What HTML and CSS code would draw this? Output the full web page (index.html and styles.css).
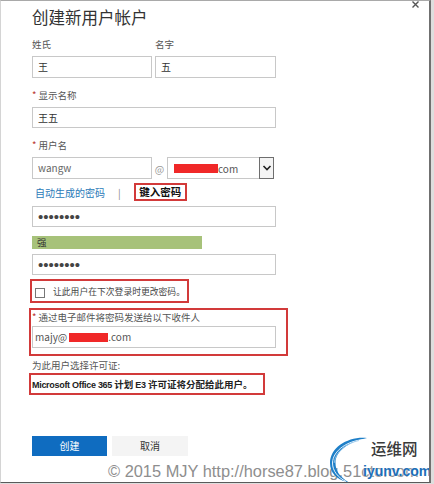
FILE: index.html
```html
<!DOCTYPE html>
<html>
    <head lang="zh">
        <meta charset="UTF-8">
        <title>创建新用户帐户</title>
        <link rel="stylesheet" href="styles.css">
    </head>
    <body>
        <div class="frame">
            <span class="close">
                <svg width="7" height="7" viewBox="0 0 7 7"><path d="M0.5 0.5L6.5 6.5M6.5 0.5L0.5 6.5" stroke="#555" stroke-width="1.4"/></svg>
            </span>
            <div class="form">
                <h1 class="title">创建新用户帐户</h1>
                <div class="names">
                    <div class="col first">
                        <div class="label">姓氏</div>
                        <div class="input">王</div>
                    </div>
                    <div class="col second">
                        <div class="label">名字</div>
                        <div class="input">五</div>
                    </div>
                </div>
                <div class="label gap10"><span class="star">*</span>显示名称</div>
                <div class="input thin mt6">王五</div>
                <div class="label gap10"><span class="star">*</span>用户名</div>
                <div class="user-row">
                    <div class="input nomt user">wangw</div>
                    <span class="at">@</span>
                    <div class="select">
                        <div class="sel-text"><span class="mask"></span>com</div>
                        <div class="sel-arrow">
                            <svg width="10" height="8" viewBox="0 0 10 8"><path d="M1.5 2L5 5.5L8.5 2" fill="none" stroke="#222" stroke-width="1.6"/></svg>
                        </div>
                    </div>
                </div>
                <div class="links">
                    <a class="auto">自动生成的密码</a>
                    <span class="sep">|</span>
                    <span class="typed">键入密码</span>
                </div>
                <div class="input thin pwd mt5">••••••••</div>
                <div class="strength">强</div>
                <div class="input thin pwd mt9">••••••••</div>
                <div class="check-box">
                    <span class="check"></span>
                    <span class="check-text">让此用户在下次登录时更改密码。</span>
                </div>
                <div class="mail-box">
                    <div class="label"><span class="star">*</span>通过电子邮件将密码发送给以下收件人</div>
                    <div class="input mail">majy@<span class="mask"></span>.com</div>
                </div>
                <div class="label mt2">为此用户选择许可证:</div>
                <div class="license"><b class="latin">Microsoft Office 365</b> 计划 <b class="latin">E3</b> 许可证将分配给此用户。</div>
                <div class="buttons">
                    <span class="btn primary">创建</span>
                    <span class="btn">取消</span>
                </div>
            </div>
            <div class="watermark">© 2015 MJY http://horse87.blog.51cto.com</div>
            <div class="logo">
                <svg class="swoosh" width="44" height="48" viewBox="0 0 44 48">
                    <path d="M40 3C22 1 3 12 3 28C3 38 10 45 22 47.5C13 42 8.5 36 8.5 28C8.5 15 24 6 40 3Z" fill="#1e7fc8"/>
                    <path d="M36 4.6C21 6 6 15 5.5 28C5.5 36 11 42.5 19 46.5" fill="none" stroke="#fff" stroke-width="0.9"/>
                    <path d="M32 5.5C19 8.5 8 17 7.2 28" fill="none" stroke="#9ccbee" stroke-width="0.8"/>
                </svg>
                <div class="logo-cn">运维网</div>
                <div class="logo-en">iyunv.com</div>
            </div>
        </div>
    </body>
</html>
```

FILE: styles.css
```css
*{
    margin:0;
    padding:0;
    box-sizing:border-box;
}
body{
    background-color:#dedede;
    font-family:"Noto Sans CJK SC","Liberation Sans",sans-serif;
    color:#333;
}
.frame{
    position:relative;
    width:431px;
    height:483px;
    background-color:#fff;
    border-top:1px solid #a9a9a9;
    border-left:1px solid #d4d4d4;
    border-right:2px solid #707070;
    border-bottom:1px solid #5a5a5a;
    padding-left:31px;
    overflow:hidden;
}
.close{
    position:absolute;
    right:10px;
    top:0;
    line-height:0;
}
.form{
    width:244px;
}
.title{
    font-size:16.5px;
    font-weight:normal;
    line-height:24px;
    margin-top:4px;
    color:#333;
}
.names{
    display:flex;
    gap:3px;
    margin-top:8px;
}
.names .first{
    width:120px;
}
.names .second{
    width:121px;
}
.label{
    font-size:9.5px;
    line-height:14px;
    color:#555;
    white-space:nowrap;
}
.star{
    color:#b8322a;
    margin-right:2px;
}
.gap10{
    margin-top:10px;
}
.mt2{
    margin-top:2px;
}
.mt5{
    margin-top:5px;
}
.mt6{
    margin-top:6px;
}
.mt9{
    margin-top:9px;
}
.input{
    height:22px;
    border:1px solid #c8c8c8;
    font-size:10px;
    line-height:20px;
    padding-left:5px;
    color:#333;
    margin-top:5px;
    white-space:nowrap;
}
.input.thin{
    height:21px;
    line-height:19px;
}
.input.nomt{
    margin-top:0;
}
.user-row{
    display:flex;
    align-items:center;
    margin-top:5px;
}
.input.user{
    width:120px;
    color:#666;
}
.at{
    width:15px;
    text-align:center;
    font-size:10px;
    color:#999;
}
.select{
    width:107px;
    height:22px;
    border:1px solid #c8c8c8;
    display:flex;
}
.sel-text{
    flex:1;
    display:flex;
    align-items:center;
    padding-left:6px;
    font-size:10px;
    color:#555;
}
.mask{
    display:inline-block;
    width:44px;
    height:9px;
    background-color:#f02828;
}
.sel-arrow{
    width:15px;
    border:1px solid #6e6e6e;
    margin:-1px -1px -1px 0;
    display:flex;
    align-items:center;
    justify-content:center;
    background-color:#f4f4f4;
}
.links{
    display:flex;
    align-items:center;
    height:18px;
    margin-top:4px;
    font-size:10px;
}
.auto{
    color:#2a7ab8;
    margin-left:3px;
}
.sep{
    color:#888;
    margin-left:13px;
    margin-right:13px;
}
.typed{
    height:18px;
    width:53px;
    border:2px solid #d23a3a;
    font-weight:bold;
    font-size:10.5px;
    line-height:14px;
    text-align:center;
    color:#111;
}
.pwd{
    font-family:"Liberation Sans",sans-serif;
    font-size:15px;
    color:#444;
}
.strength{
    width:170px;
    height:13px;
    margin-top:9px;
    background-color:#a7c27a;
    font-size:9.5px;
    line-height:13px;
    padding-left:5px;
    color:#333;
}
.check-box{
    display:flex;
    align-items:center;
    width:159px;
    height:24px;
    margin-top:4px;
    margin-left:-2px;
    border:2px solid #d23a3a;
    padding-left:3px;
}
.check{
    flex-shrink:0;
    width:10px;
    height:10px;
    border:1px solid #777;
    margin-top:4px;
    background-color:#fff;
}
.check-text{
    margin-left:8px;
    font-size:8.8px;
    color:#444;
    white-space:nowrap;
}
.mail-box{
    width:259px;
    height:48px;
    margin-top:5px;
    margin-left:-3px;
    border:2px solid #d23a3a;
    padding-left:1px;
    padding-right:10px;
}
.input.mail{
    display:flex;
    align-items:center;
    margin-top:2px;
    padding-left:2px;
    color:#555;
}
.input.mail .mask{
    width:39px;
    margin-left:2px;
}
.license{
    width:236px;
    height:22px;
    margin-top:1px;
    margin-left:-3px;
    border:2px solid #d23a3a;
    padding-left:1px;
    font-size:9.5px;
    line-height:18px;
    font-weight:bold;
    color:#222;
    white-space:nowrap;
}
.latin{
    font-family:"Liberation Sans",sans-serif;
    font-size:9px;
    letter-spacing:-0.3px;
}
.buttons{
    display:flex;
    gap:5px;
    margin-top:41px;
}
.btn{
    width:76px;
    height:20px;
    line-height:20px;
    text-align:center;
    font-size:10px;
    background-color:#f4f4f4;
    color:#333;
}
.btn.primary{
    width:75px;
    background-color:#0f6cc0;
    color:#fff;
}
.watermark{
    position:absolute;
    left:107px;
    top:459px;
    font-family:"Liberation Sans",sans-serif;
    font-size:16.4px;
    line-height:22px;
    color:#8e8e8e;
    white-space:nowrap;
    text-shadow:0 0 2px #fff,0 0 1px #fff;
}
.logo{
    position:absolute;
    left:326px;
    top:434px;
    width:104px;
    height:48px;
}
.swoosh{
    position:absolute;
    left:0;
    top:0;
}
.logo-cn{
    position:absolute;
    left:44px;
    top:3px;
    font-size:15.5px;
    font-weight:500;
    line-height:20px;
    color:#3a3a3a;
}
.logo-en{
    position:absolute;
    left:36px;
    top:26px;
    font-family:"Liberation Sans",sans-serif;
    font-size:14px;
    font-weight:bold;
    line-height:20px;
    color:#1d6fb8;
    text-shadow:0 0 2px #fff;
}
```
